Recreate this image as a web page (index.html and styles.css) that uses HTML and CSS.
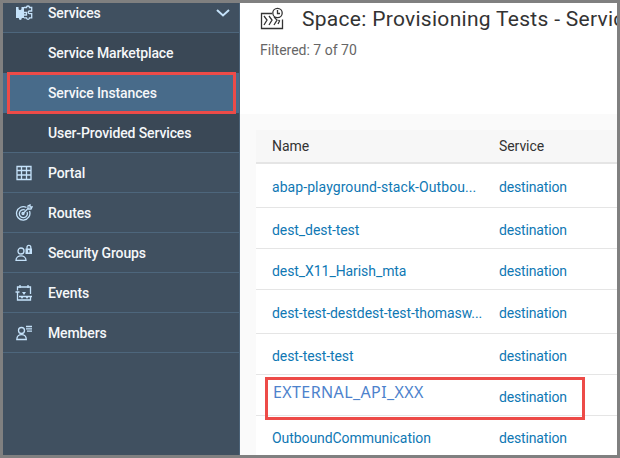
FILE: index.html
```html
<!DOCTYPE html>
<html lang="en">
<head>
<meta charset="utf-8">
<title>Service Instances</title>
<link rel="stylesheet" href="styles.css">
</head>
<body>
<div class="window">
  <nav class="sidebar">
    <a class="item item-first">
      <svg class="icon" viewBox="0 0 18 18"><path class="solid" d="M1 3h2.500v1.500a1.500 1.500 0 0 0 3 0V3H9v11H6.800a1.500 2 0 0 1-3 0H1z"/><path d="M9 3.500h2.500a1.500 1.500 0 1 1 3 0h2.200v3.500h-2.200a1.300 1.300 0 0 0 0 2.600h2.200v4.200h-2.200a1.500 1.500 0 0 1-3 0H9M9 8.500h2.500v2.500H9"/></svg>
      <span>Services</span>
      <svg class="chevron" viewBox="0 0 14 8"><path d="M1 1l6 5.500L13 1"/></svg>
    </a>
    <div class="submenu">
      <a class="sub">Service Marketplace</a>
      <a class="sub selected">Service Instances<i class="callout callout-nav"></i></a>
      <a class="sub">User-Provided Services</a>
    </div>
    <a class="item"><svg class="icon" viewBox="0 0 18 18"><path d="M2 2.500h14v13H2zM6.500 2.500v13M11.500 2.500v13M2 6.500h14M2 11h14"/></svg><span>Portal</span></a>
    <a class="item"><svg class="icon" viewBox="0 0 18 18"><path d="M11.500 3.500A6.700 6.700 0 1 0 14.500 7M10 6A4 4 0 1 0 12 8M8 9.500l5-5V2l2-1v2h2l-1 2h-3"/><circle cx="8" cy="9.500" r="1"/></svg><span>Routes</span></a>
    <a class="item"><svg class="icon" viewBox="0 0 18 18"><circle cx="6" cy="7" r="3"/><path d="M1 16.300c0-6 10-6 10 0zM12 5V3.300a1.900 1.900 0 0 1 3.800 0V5"/><path class="solid" d="M10.500 4.500H17V10h-6.500z"/><path class="cut" d="M13.800 6v2.500"/></svg><span>Security Groups</span></a>
    <a class="item"><svg class="icon" viewBox="0 0 18 18"><path d="M2.500 6.500V3h13v3.500M5 1v3M13 1v3M.500 8h4M2.500 8v8h13v-4M15.500 6v4M4 12.500h13"/><path class="solid" d="M7 8h4l-2 3zM5 12h4l-2 3zM10 12h4l-2 3z"/></svg><span>Events</span></a>
    <a class="item"><svg class="icon" viewBox="0 0 18 18"><circle cx="6.500" cy="6.500" r="3"/><path d="M1.800 15.500c0-6.500 9.500-6.500 9.500 0zM11 2.500h6M11 4.800h6M12 7.200h5"/></svg><span>Members</span></a>
  </nav>
  <main class="content">
    <header class="page-header">
      <div class="heading">
        <svg class="title-icon" viewBox="0 0 24 24"><path d="M12 6.500H1.500v15h21v-9M4 9l3 4-3 5M9 9l3 4-3 5M14 10l3 3-3 5M18.500 13l1 1-1.500 3"/><circle cx="17.500" cy="6" r="4.700"/><path d="M17.500 3v3.500H20"/></svg>
        <h1>Space: Provisioning Tests - Service</h1>
      </div>
      <p class="filter">Filtered: 7 of 70</p>
    </header>
    <section class="table">
      <div class="row head"><span>Name</span><span>Service</span></div>
      <div class="row tall"><a class="wide">abap-playground-stack-Outbou...</a><a class="service">destination</a></div>
      <div class="row"><a>dest_dest-test</a><a class="service">destination</a></div>
      <div class="row"><a>dest_X11_Harish_mta</a><a class="service">destination</a></div>
      <div class="row tall"><a>dest-test-destdest-test-thomasw...</a><a class="service">destination</a></div>
      <div class="row"><a>dest-test-test</a><a class="service">destination</a></div>
      <div class="row"><a class="external">EXTERNAL_API_XXX</a><a class="service">destination</a><i class="callout callout-row"></i></div>
      <div class="row"><a>OutboundCommunication</a><a class="service">destination</a></div>
    </section>
  </main>
</div>
</body>
</html>
```
FILE: styles.css
```css
* { box-sizing: border-box; }
body { margin: 0; font-family: Roboto, "Liberation Sans", sans-serif; font-size: 14px; }
.window { display: flex; width: 620px; height: 458px; border: 3px solid #808080; overflow: hidden; background: #fafafa; }
.sidebar { width: 237px; flex: none; background: #405060; border-right: 1px solid #4c6378; color: #f5f7f9; font-weight: 500; letter-spacing: -.12px; }
.item { display: flex; align-items: center; height: 40px; padding: 0 9px 0 12px; border-bottom: 1px solid #4d667c; }
.item-first { height: 30px; padding-bottom: 9px; }
.icon { width: 18px; height: 18px; margin-right: 15px; flex: none; }
svg path, svg circle { fill: none; stroke: #c5e2fa; stroke-width: 1.3; }
svg .solid { fill: #c5e2fa; stroke: none; }
svg .cut { stroke: #405060; }
.chevron { width: 14px; height: 8px; margin-left: auto; }
svg.chevron path { stroke-width: 2; }
.submenu { background: #3a4856; border-bottom: 1px solid #4d667c; }
.sub { display: flex; align-items: center; height: 40px; padding-left: 45px; position: relative; }
.sub:last-child { height: 39px; }
.selected { background: #486b8a; }
.callout { position: absolute; border: 3px solid #ed4b48; }
.callout-nav { left: 4px; top: -1px; width: 229px; height: 42px; z-index: 1; }
.content { flex: 1; min-width: 0; }
.page-header { height: 111px; background: #fff; padding: 3px 0 0 20px; overflow: hidden; }
.heading { display: flex; height: 25px; align-items: center; }
.title-icon { width: 24px; height: 24px; margin-right: 18px; flex: none; }
.title-icon path, .title-icon circle { stroke: #333; stroke-width: 1.3; }
h1 { margin: 0; font-size: 21px; font-weight: 400; letter-spacing: .29px; color: #333; white-space: nowrap; }
.filter { margin: 10px 0 0; line-height: 18px; color: #666; }
.table { margin: 16px 0 0 16px; background: #fff; }
.row { display: grid; grid-template-columns: 227px 1fr; align-items: center; height: 41px; padding: 3px 0 0 16px; border-bottom: 1px solid #e5e5e5; color: #0f78b4; position: relative; white-space: nowrap; letter-spacing: -.07px; }
.head { height: 34px; padding-top: 0; background: #f7f7f7; border-bottom-width: 2px; color: #333; }
.row.tall { height: 44px; }
.wide { letter-spacing: .07px; }
.service { letter-spacing: -.15px; }
.external { font-family: "Noto Sans", sans-serif; font-size: 16px; letter-spacing: .4px; padding-left: 1px; color: #4d82cc; margin-top: -9px; }
.callout-row { left: 9px; top: 2px; width: 320px; height: 43px; z-index: 1; }
```
